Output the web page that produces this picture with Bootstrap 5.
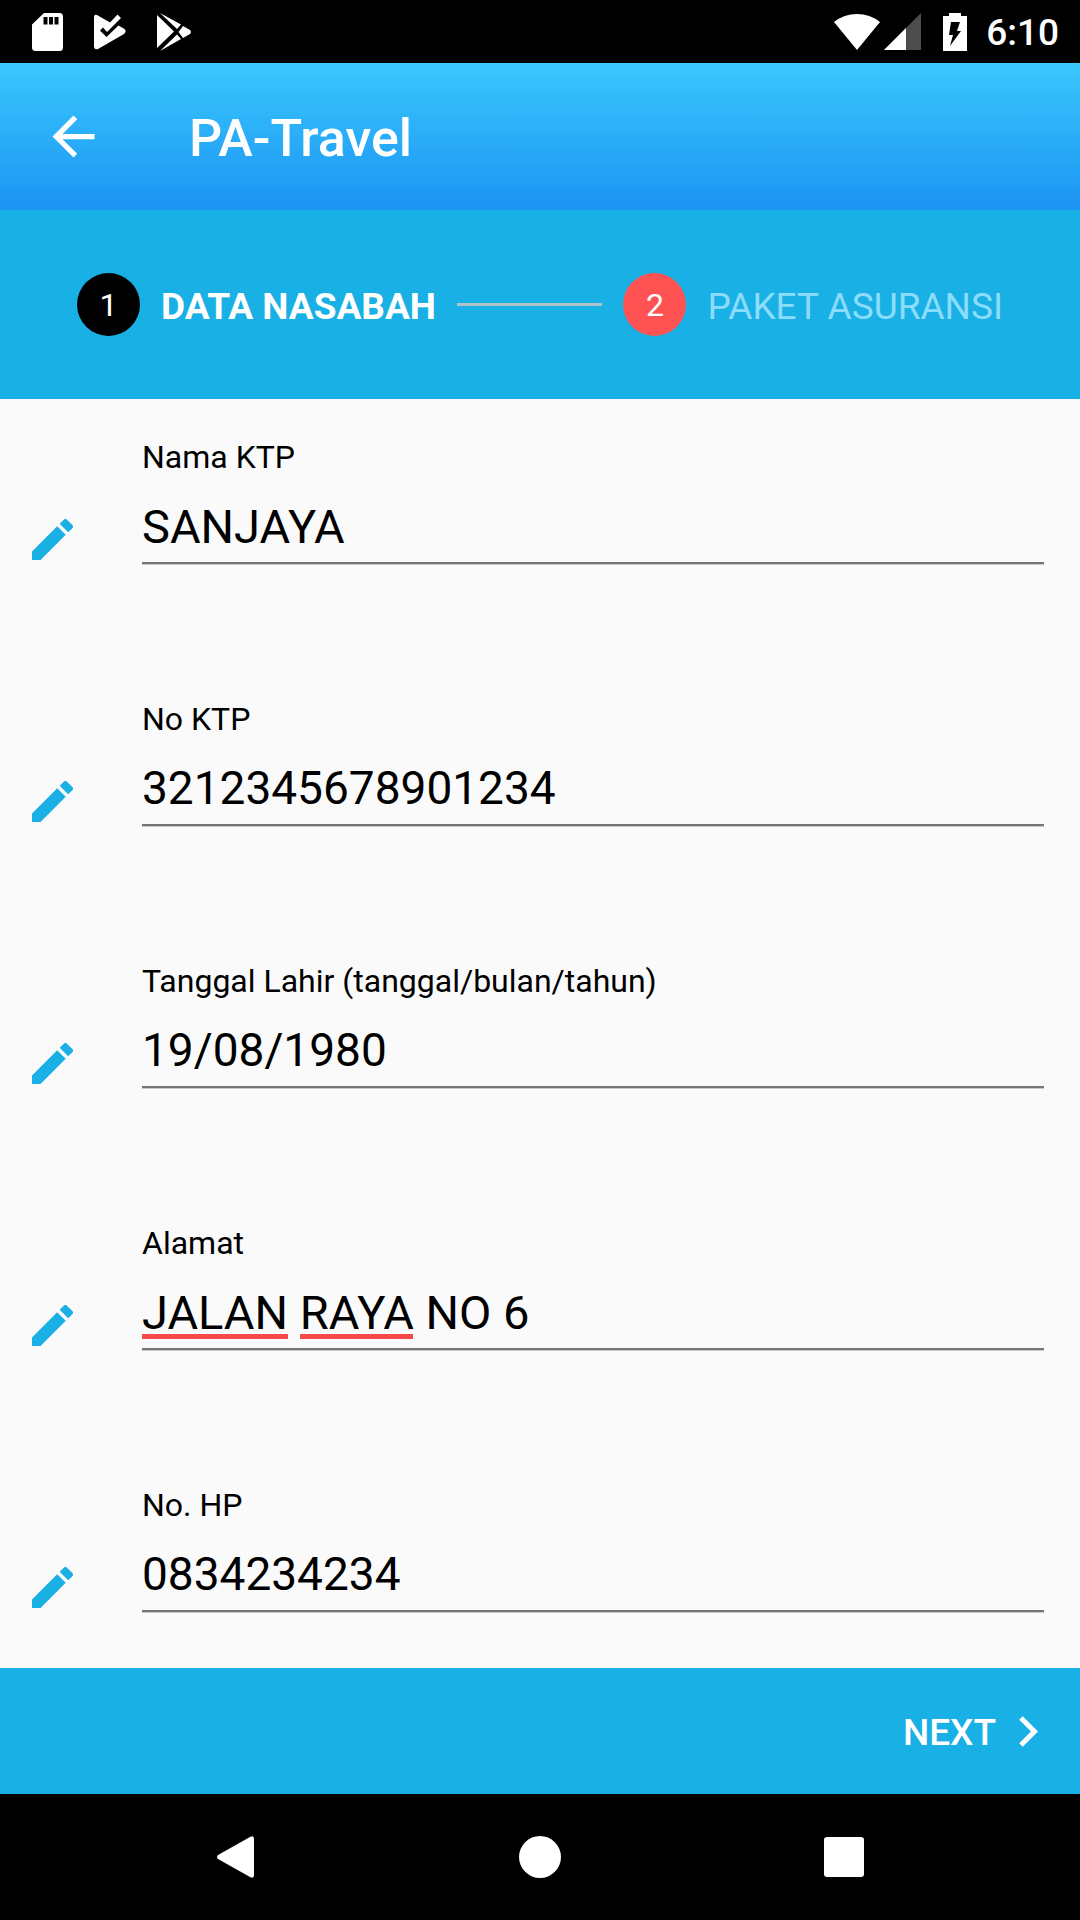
<!DOCTYPE html>
<html lang="id">
<head>
<meta charset="utf-8">
<meta name="viewport" content="width=device-width, initial-scale=1">
<title>PA-Travel</title>
<link href="https://cdn.jsdelivr.net/npm/bootstrap@5.3.0/dist/css/bootstrap.min.css" rel="stylesheet">
<style>
  :root { --brand: #19b0e6; }
  body { font-family: Roboto, "Noto Sans", sans-serif; background: #fafafa; color: #000; }
  svg { display: block; flex: none; }
  .status-bar { height: 63px; padding: 0 21px 0 32px; }
  .status-left { gap: 31px; }
  .battery { margin: 0 19px 0 22px; }
  .clock { font-size: 37px; line-height: 48px; font-weight: 500; padding-top: 2px; }
  .app-bar { height: 147px; padding: 0 42px; gap: 84px; background: linear-gradient(#3ac7fd, #1b94f3); }
  .app-title { font-size: 52px; line-height: 64px; font-weight: 500; padding-top: 4px; }
  .stepper { height: 189px; padding: 0 77px; gap: 21px; background: var(--brand); font-size: 37px; line-height: 48px; }
  .step { gap: 21px; color: #8cdcfb; white-space: nowrap; }
  .step.current { color: #fff; font-weight: 700; }
  .step-name { padding-top: 4px; }
  .step-number { width: 63px; height: 63px; background: #ff5252; color: #fff; font-size: 32px; font-weight: 400; }
  .current .step-number { background: #000; }
  .step-line { height: 3px; background: #adc2c9; }
  .form-area { padding: 38px 36px 0 32px; gap: 135px; min-height: 0; }
  .field-row { gap: 69px; }
  .field-row label { font-size: 32px; line-height: 40px; margin-bottom: 19px; }
  .field-row .form-control { font-size: 47px; line-height: 60px; height: 68px; padding: 0 0 6px; color: #000; background: transparent; border: 0; border-bottom: 2px solid #757575; border-radius: 0; box-shadow: 0 1px #c8c8c8; }
  .field-row .digits { font-size: 46px; }
  .spell-marks { left: 0; bottom: 7px; gap: 12px; }
  .spell-marks span { height: 5px; background: #f54a4a; }
  .spell-jalan { width: 146px; }
  .spell-raya { width: 113px; }
  .action-bar { height: 126px; padding: 0 42px 0 36px; background: var(--brand); }
  .next-btn { gap: 23px; font-size: 37px; line-height: 48px; font-weight: 500; }
  .next-btn span { padding-top: 4px; }
  .nav-bar { height: 126px; padding: 0 84px; }
</style>
</head>
<body>
<div class="d-flex flex-column vh-100 overflow-hidden">
  <div class="status-bar d-flex align-items-center justify-content-between bg-black text-white flex-shrink-0">
    <div class="status-left d-flex align-items-center">
      <svg width="31" height="38" viewBox="0 0 31 38" aria-hidden="true"><path fill="#fff" fill-rule="evenodd" d="M12 0H27.500Q31 0 31 3.500V34.500Q31 38 27.500 38H3.500Q0 38 0 34.500V11.500zM11.500 4V11.500H15.500V4zM17 4V11.500H21V4zM22.500 4V11.500H26.500V4z"/></svg>
      <svg width="32" height="36" viewBox="0 0 32 36" aria-hidden="true"><path fill="#fff" d="M0 3Q0 0 3 1L16 8.500 23.500 .5 27 4 13 18 9 13.500 6 16.500 12.500 23 24.500 11.500 30.500 15Q33 17.500 30 20L4 35Q0 36 0 32z"/></svg>
      <svg width="34" height="38" viewBox="0 0 34 38" aria-hidden="true"><path fill="#fff" d="M0 2L17 18.500 0 35zM3 0L24 11.500 20 16zM3 38L24 26 20 21.500zM26 13L33 17Q35 19 33 21L26 25 21.500 19z"/></svg>
    </div>
    <div class="d-flex align-items-center">
      <svg width="46" height="36" viewBox="0 0 46 36" aria-hidden="true"><path fill="#fff" d="M0 8Q10 0 23 0T46 8L23 36z"/></svg>
      <svg class="ms-1" width="37" height="37" viewBox="0 0 37 37" aria-hidden="true"><path fill="#4d4d4d" d="M37 0V37H0z"/><path fill="#fff" d="M22 15V37H0z"/></svg>
      <svg class="battery" width="24" height="38" viewBox="0 0 24 38" aria-hidden="true"><path fill="#fff" fill-rule="evenodd" d="M6 0H18V3H24V38H0V3H6zM8 9L6 22H10L7 33 18 18H14L17 9z"/></svg>
      <span class="clock">6:10</span>
    </div>
  </div>

  <header class="app-bar d-flex align-items-center text-white flex-shrink-0">
    <button type="button" class="btn p-0 border-0 text-white" aria-label="Kembali">
      <svg width="63" height="63" viewBox="0 0 24 24"><path fill="currentColor" d="M20 11H7.830l5.590-5.590L12 4l-8 8 8 8 1.410-1.410L7.830 13H20v-2z"/></svg>
    </button>
    <h1 class="app-title m-0">PA-Travel</h1>
  </header>

  <div class="stepper d-flex align-items-center flex-shrink-0">
    <div class="step current d-flex align-items-center" aria-current="step">
      <span class="step-number rounded-circle d-flex align-items-center justify-content-center">1</span>
      <span class="step-name">DATA NASABAH</span>
    </div>
    <div class="step-line flex-grow-1"></div>
    <div class="step d-flex align-items-center">
      <span class="step-number rounded-circle d-flex align-items-center justify-content-center">2</span>
      <span class="step-name">PAKET ASURANSI</span>
    </div>
  </div>

  <svg class="d-none" aria-hidden="true"><symbol id="pencil" viewBox="3 3 18 18"><path fill="#1ab0e6" d="M3 17.250V21h3.750L17.810 9.940l-3.750-3.750L3 17.250zM20.710 7.040a1 1 0 0 0 0-1.410l-2.340-2.340a1 1 0 0 0-1.410 0l-1.830 1.830 3.750 3.750 1.830-1.830z"/></symbol></svg>

  <form class="form-area d-flex flex-column flex-grow-1 overflow-hidden">
    <div class="field-row d-flex align-items-end">
      <svg class="mb-1" width="41" height="41" aria-hidden="true"><use href="#pencil"/></svg>
      <div class="d-flex flex-column flex-grow-1">
        <label for="nama">Nama KTP</label>
        <input id="nama" class="form-control" type="text" value="SANJAYA">
      </div>
    </div>
    <div class="field-row d-flex align-items-end">
      <svg class="mb-1" width="41" height="41" aria-hidden="true"><use href="#pencil"/></svg>
      <div class="d-flex flex-column flex-grow-1">
        <label for="ktp">No KTP</label>
        <input id="ktp" class="form-control digits" type="text" value="3212345678901234">
      </div>
    </div>
    <div class="field-row d-flex align-items-end">
      <svg class="mb-1" width="41" height="41" aria-hidden="true"><use href="#pencil"/></svg>
      <div class="d-flex flex-column flex-grow-1">
        <label for="lahir">Tanggal Lahir (tanggal/bulan/tahun)</label>
        <input id="lahir" class="form-control digits" type="text" value="19/08/1980">
      </div>
    </div>
    <div class="field-row d-flex align-items-end">
      <svg class="mb-1" width="41" height="41" aria-hidden="true"><use href="#pencil"/></svg>
      <div class="d-flex flex-column flex-grow-1 position-relative">
        <label for="alamat">Alamat</label>
        <input id="alamat" class="form-control" type="text" value="JALAN RAYA NO 6" spellcheck="false">
        <div class="spell-marks position-absolute d-flex pe-none mb-1" aria-hidden="true"><span class="spell-jalan"></span><span class="spell-raya"></span></div>
      </div>
    </div>
    <div class="field-row d-flex align-items-end">
      <svg class="mb-1" width="41" height="41" aria-hidden="true"><use href="#pencil"/></svg>
      <div class="d-flex flex-column flex-grow-1">
        <label for="hp">No. HP</label>
        <input id="hp" class="form-control digits" type="tel" value="0834234234">
      </div>
    </div>
  </form>

  <div class="action-bar d-flex align-items-center justify-content-end flex-shrink-0">
    <button type="button" class="next-btn btn p-0 border-0 text-white d-flex align-items-center">
      <span>NEXT</span>
      <svg width="19" height="31" viewBox="0 0 19 31" aria-hidden="true"><path fill="none" stroke="currentColor" stroke-width="5" d="M2 2L15.500 15.500 2 29"/></svg>
    </button>
  </div>

  <nav class="nav-bar d-flex align-items-center bg-black flex-shrink-0" aria-label="Navigasi sistem">
    <button type="button" class="btn p-0 border-0 flex-fill d-flex justify-content-center" aria-label="Back">
      <svg width="42" height="42" viewBox="0 0 42 42"><path fill="#fff" d="M3 19L35 1Q39-1 39 3V39Q39 43 35 41L3 23Q1 21 3 19z"/></svg>
    </button>
    <button type="button" class="btn p-0 border-0 flex-fill d-flex justify-content-center" aria-label="Home">
      <svg width="42" height="42" viewBox="0 0 42 42"><circle cx="21" cy="21" r="21" fill="#fff"/></svg>
    </button>
    <button type="button" class="btn p-0 border-0 flex-fill d-flex justify-content-center" aria-label="Recent apps">
      <svg width="42" height="42" viewBox="0 0 42 42"><rect x="1" y="1" width="40" height="40" rx="3" fill="#fff"/></svg>
    </button>
  </nav>
</div>
<script src="https://cdn.jsdelivr.net/npm/bootstrap@5.3.0/dist/js/bootstrap.bundle.min.js"></script>
</body>
</html>
